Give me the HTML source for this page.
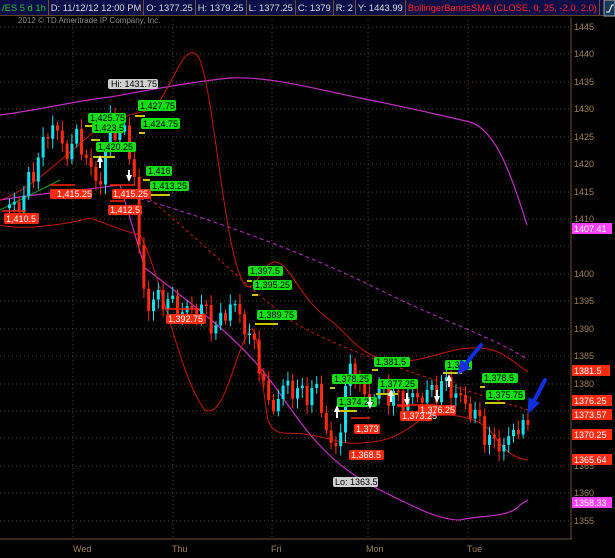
<!DOCTYPE html>
<html><head><meta charset="utf-8"><style>
html,body{margin:0;padding:0;background:#000;width:615px;height:558px;overflow:hidden}
#hdr{position:absolute;left:0;top:0;width:603px;height:15px;overflow:hidden;background:#0a0f4a;border-bottom:1px solid #5a4420;font:9.4px "Liberation Sans",sans-serif;white-space:nowrap;display:flex}
#hdr span{border-right:1px solid #6a5030;padding:0 2px;line-height:15px;color:#d8d8d8}
svg{position:absolute;left:0;top:0}
</style></head><body>
<div id="hdr"><span style="color:#20c020">/ES 5 d 1h</span><span>D: 11/12/12 12:00 PM</span><span>O: 1377.25</span><span>H: 1379.25</span><span>L: 1377.25</span><span>C: 1379</span><span>R: 2</span><span>Y: 1443.99</span><span style="color:#ff2020">BollingerBandsSMA (CLOSE, 0, 25, -2.0, 2.0)</span><span>..</span></div>
<svg id="c" width="615" height="558" viewBox="0 0 615 558" font-family="Liberation Sans, sans-serif">
<rect x="604" y="0" width="11" height="16" fill="#1a3a5a" stroke="#aaa"/>
<path d="M606 12 L609 12 L612 5 L614 5" stroke="#fff" fill="none"/>
<text x="18" y="23" fill="#888" font-size="8">2012 © TD Ameritrade IP Company, Inc.</text>
<g stroke="#5a4420" stroke-dasharray="1,3" stroke-width="1">
<line x1="0" y1="27" x2="570" y2="27"/><line x1="0" y1="54" x2="570" y2="54"/><line x1="0" y1="82" x2="570" y2="82"/><line x1="0" y1="109" x2="570" y2="109"/><line x1="0" y1="137" x2="570" y2="137"/><line x1="0" y1="164" x2="570" y2="164"/><line x1="0" y1="192" x2="570" y2="192"/><line x1="0" y1="219" x2="570" y2="219"/><line x1="0" y1="246" x2="570" y2="246"/><line x1="0" y1="274" x2="570" y2="274"/><line x1="0" y1="301" x2="570" y2="301"/><line x1="0" y1="329" x2="570" y2="329"/><line x1="0" y1="356" x2="570" y2="356"/><line x1="0" y1="384" x2="570" y2="384"/><line x1="0" y1="411" x2="570" y2="411"/><line x1="0" y1="438" x2="570" y2="438"/><line x1="0" y1="466" x2="570" y2="466"/><line x1="0" y1="493" x2="570" y2="493"/><line x1="0" y1="521" x2="570" y2="521"/>
<line x1="73" y1="20" x2="73" y2="538"/><line x1="173" y1="20" x2="173" y2="538"/><line x1="272" y1="20" x2="272" y2="538"/><line x1="368" y1="20" x2="368" y2="538"/><line x1="468" y1="20" x2="468" y2="538"/>
</g>
<line x1="0" y1="539" x2="572" y2="539" stroke="#6a5030"/>
<line x1="571" y1="18" x2="571" y2="539" stroke="#6a5030"/>
<g fill="#a08050" font-size="9">
<text x="73" y="552">Wed</text><text x="172" y="552">Thu</text><text x="271" y="552">Fri</text><text x="366" y="552">Mon</text><text x="467" y="552">Tue</text>
<text x="574" y="30">1445</text><text x="574" y="57">1440</text><text x="574" y="85">1435</text><text x="574" y="112">1430</text><text x="574" y="140">1425</text><text x="574" y="167">1420</text><text x="574" y="195">1415</text><text x="574" y="222">1410</text><text x="574" y="277">1400</text><text x="574" y="304">1395</text><text x="574" y="332">1390</text><text x="574" y="359">1385</text><text x="574" y="387">1380</text><text x="574" y="469">1365</text><text x="574" y="496">1360</text><text x="574" y="524">1355</text>
</g>
<g id="bands" fill="none">
<path d="M0 115 C40 110 80 100 110 97 C150 90 190 82 230 78 C270 76 320 90 360 98 C400 106 440 115 470 122 C495 130 510 170 527 225" stroke="#c030c0" stroke-width="1.2"/>
<path d="M0 200 C30 195 60 192 80 190 C100 188 110 186 120 185 L145 268 C200 310 240 340 270 380 C300 420 320 460 380 490 C420 510 440 520 460 520 C480 515 510 518 520 505 L528 500" stroke="#c030c0" stroke-width="1.2"/>
<path d="M120 193 C200 215 300 250 380 290 C440 320 500 340 528 360" stroke="#b030c0" stroke-dasharray="4,3"/>
<path d="M145 195 C200 240 250 290 290 320 C330 345 400 370 528 410" stroke="#c02010" stroke-dasharray="3,3"/>
<path d="M0 200 C30 190 60 160 90 135 C110 118 130 115 150 110 C170 100 185 30 200 60 C215 100 225 260 245 285 C255 295 262 262 275 262 C290 262 300 300 330 320 C345 330 360 358 390 360 C420 365 440 350 470 348 C500 346 510 360 528 372" stroke="#c01808" stroke-width="1"/>
<path d="M0 225 C20 230 60 226 90 218 C110 225 120 230 140 235 C160 270 180 380 205 410 C225 420 235 350 250 330 C258 320 262 390 268 420 C275 440 290 430 310 435 C330 438 345 445 360 443 C380 442 395 440 420 420 C440 412 470 413 490 430 C500 445 510 458 528 460" stroke="#c01808" stroke-width="1"/>
<path d="M0 210 L60 180" stroke="#10a010"/>
</g>
<g id="candles"></g>
<g stroke="#c8c800" stroke-width="2">
<line x1="85" y1="126" x2="100" y2="126"/><line x1="91" y1="140" x2="100" y2="140"/><line x1="93" y1="157" x2="115" y2="157"/><line x1="135" y1="116" x2="145" y2="116"/><line x1="139" y1="133" x2="145" y2="133"/><line x1="143" y1="180" x2="150" y2="180"/><line x1="150" y1="195" x2="170" y2="195"/>
<line x1="247" y1="281" x2="252" y2="281"/><line x1="252" y1="295" x2="258" y2="295"/><line x1="255" y1="324" x2="278" y2="324"/>
<line x1="330" y1="388" x2="335" y2="388"/><line x1="372" y1="370" x2="378" y2="370"/><line x1="376" y1="394" x2="398" y2="394"/><line x1="335" y1="411" x2="357" y2="411"/><line x1="443" y1="373" x2="462" y2="373"/><line x1="480" y1="387" x2="485" y2="387"/><line x1="485" y1="403" x2="505" y2="403"/>
</g>
<g stroke="#ff2000" stroke-width="1.5">
<line x1="50" y1="185" x2="75" y2="185"/><line x1="110" y1="185" x2="135" y2="185"/><line x1="110" y1="201" x2="125" y2="201"/><line x1="2" y1="211" x2="25" y2="211"/><line x1="165" y1="309" x2="200" y2="309"/><line x1="351" y1="418" x2="370" y2="418"/><line x1="397" y1="405" x2="435" y2="405"/><line x1="397" y1="406" x2="410" y2="406"/>
</g>
<g font-size="9">
<g fill="#10e010"><rect x="138" y="100" width="38" height="11" rx="2"/><rect x="88" y="113" width="38" height="10" rx="2"/><rect x="92" y="123" width="32" height="10" rx="2"/><rect x="141" y="118" width="39" height="11" rx="2"/><rect x="96" y="142" width="40" height="10" rx="2"/><rect x="146" y="166" width="26" height="10" rx="2"/><rect x="150" y="181" width="39" height="10" rx="2"/>
<rect x="248" y="266" width="35" height="10" rx="2"/><rect x="253" y="280" width="39" height="10" rx="2"/><rect x="257" y="310" width="40" height="10" rx="2"/>
<rect x="374" y="357" width="36" height="10" rx="2"/><rect x="332" y="374" width="40" height="10" rx="2"/><rect x="378" y="379" width="40" height="10" rx="2"/><rect x="337" y="397" width="40" height="10" rx="2"/><rect x="445" y="360" width="27" height="10" rx="2"/><rect x="482" y="373" width="36" height="10" rx="2"/><rect x="486" y="390" width="39" height="10" rx="2"/></g>
<g fill="#000"><text x="140" y="109">1,427.75</text><text x="90" y="121">1,425.75</text><text x="94" y="131">1,423.5</text><text x="143" y="127">1,424.75</text><text x="98" y="150">1,420.25</text><text x="148" y="174">1,416</text><text x="152" y="189">1,413.25</text>
<text x="250" y="274">1,397.5</text><text x="255" y="288">1,395.25</text><text x="259" y="318">1,389.75</text>
<text x="376" y="365">1,381.5</text><text x="334" y="382">1,378.25</text><text x="380" y="387">1,377.25</text><text x="339" y="405">1,374.25</text><text x="447" y="368">1,379</text><text x="484" y="381">1,378.5</text><text x="488" y="398">1,375.75</text></g>
<g fill="#ff2a10"><rect x="50" y="189" width="42" height="10" rx="2"/><rect x="112" y="189" width="39" height="10" rx="2"/><rect x="108" y="205" width="34" height="10" rx="2"/><rect x="4" y="213" width="35" height="11" rx="2"/><rect x="166" y="314" width="40" height="10" rx="2"/><rect x="354" y="424" width="26" height="10" rx="2"/><rect x="400" y="411" width="32" height="10" rx="2"/><rect x="418" y="405" width="38" height="10" rx="2"/><rect x="349" y="450" width="35" height="10" rx="2"/></g>
<g fill="#fff"><text x="57" y="197">1,415.25</text><text x="113" y="197">1,415.25</text><text x="110" y="213">1,412.5</text><text x="6" y="222">1,410.5</text><text x="168" y="322">1,392.75</text><text x="356" y="432">1,373</text><text x="402" y="419">1,373.25</text><text x="420" y="413">1,376.25</text><text x="351" y="458">1,368.5</text></g>
<rect x="108" y="79" width="50" height="10" rx="2" fill="#d0d0d0"/><text x="111" y="87" fill="#000">Hi: 1431.75</text>
<rect x="333" y="477" width="45" height="10" rx="2" fill="#d0d0d0"/><text x="335" y="485" fill="#000">Lo: 1363.5</text>
</g>
<g fill="#fff">
<path d="M97 162 L100 155 L103 162 L101 162 L101 168 L99 168 L99 162Z"/><path d="M126 175 L129 182 L132 175 L130 175 L130 170 L128 170 L128 175Z"/>
<path d="M334 412 L337 405 L340 412 L338 412 L338 418 L336 418 L336 412Z"/><path d="M367 402 L370 409 L373 402 L371 402 L371 397 L369 397 L369 402Z"/><path d="M388 396 L391 389 L394 396 L392 396 L392 402 L390 402 L390 396Z"/><path d="M404 399 L407 406 L410 399 L408 399 L408 393 L406 393 L406 399Z"/><path d="M434 396 L437 403 L440 396 L438 396 L438 390 L436 390 L436 396Z"/><path d="M446 381 L449 374 L452 381 L450 381 L450 387 L448 387 L448 381Z"/>
</g>
<g fill="#1030e0" stroke="#1030e0">
<path d="M481 345 L464 366" stroke-width="4" stroke-linecap="round"/><path d="M458 374 L461 360 L470 368Z"/>
<path d="M545 380 L533 403" stroke-width="4" stroke-linecap="round"/><path d="M528 413 L529 398 L539 403Z"/>
</g>
<g font-size="9">
<rect x="572" y="223" width="40" height="11" fill="#ff40ff"/><text x="574" y="232" fill="#fff">1407.41</text>
<rect x="572" y="365" width="38" height="11" fill="#ff2a10"/><text x="574" y="374" fill="#fff">1381.5</text>
<rect x="572" y="395" width="40" height="11" fill="#ff2a10"/><text x="574" y="404" fill="#fff">1376.25</text>
<rect x="572" y="409" width="40" height="11" fill="#ff2a10"/><text x="574" y="418" fill="#fff">1373.57</text>
<rect x="572" y="429" width="40" height="11" fill="#ff2a10"/><text x="574" y="438" fill="#fff">1370.25</text>
<rect x="572" y="454" width="40" height="11" fill="#ff2a10"/><text x="574" y="463" fill="#fff">1365.64</text>
<rect x="572" y="497" width="40" height="11" fill="#ff40ff"/><text x="574" y="506" fill="#fff">1358.33</text>
</g>
</svg>
<script>
var k=[[8,1412],[20,1413],[30,1418],[45,1425],[52,1428],[62,1422],[78,1425],[90,1418],[100,1417],[108,1428],[115,1426],[125,1425],[132,1420],[137,1405],[145,1394],[160,1396],[180,1393],[200,1394],[215,1390],[230,1395],[245,1390],[258,1384],[268,1375],[285,1380],[300,1378],[315,1379],[325,1372],[333,1366],[345,1380],[352,1384],[362,1377],[380,1379],[400,1377],[425,1378],[445,1380],[460,1377],[475,1374],[490,1369],[505,1369],[518,1373],[528,1371]];
function P(x){for(var i=1;i<k.length;i++){if(x<=k[i][0]){var a=k[i-1],b=k[i];return a[1]+(b[1]-a[1])*(x-a[0])/(b[0]-a[0]);}}return k[k.length-1][1];}
function Y(p){return 27+(1445-p)*5.49;}
var g=document.getElementById('candles'),s='',prev=P(8);
for(var x=8;x<=528;x+=4.8){var c=P(x)+Math.sin(x*1.7)*1.6+Math.sin(x*0.53)*0.8;var o=prev;var hi=Math.max(o,c)+0.6+Math.abs(Math.sin(x*2.3))*1.2,lo=Math.min(o,c)-0.6-Math.abs(Math.cos(x*1.9))*1.2;var col=c>=o?'#10e0f0':'#ff2a10';
s+='<line x1="'+(x+1.5)+'" x2="'+(x+1.5)+'" y1="'+Y(hi)+'" y2="'+Y(lo)+'" stroke="'+col+'"/>';
var t=Y(Math.max(o,c)),h=Math.max(1.5,Y(Math.min(o,c))-t);s+='<rect x="'+x+'" y="'+t+'" width="3" height="'+h+'" fill="'+col+'"/>';prev=c;}
g.innerHTML=s;
</script>
</body></html>
